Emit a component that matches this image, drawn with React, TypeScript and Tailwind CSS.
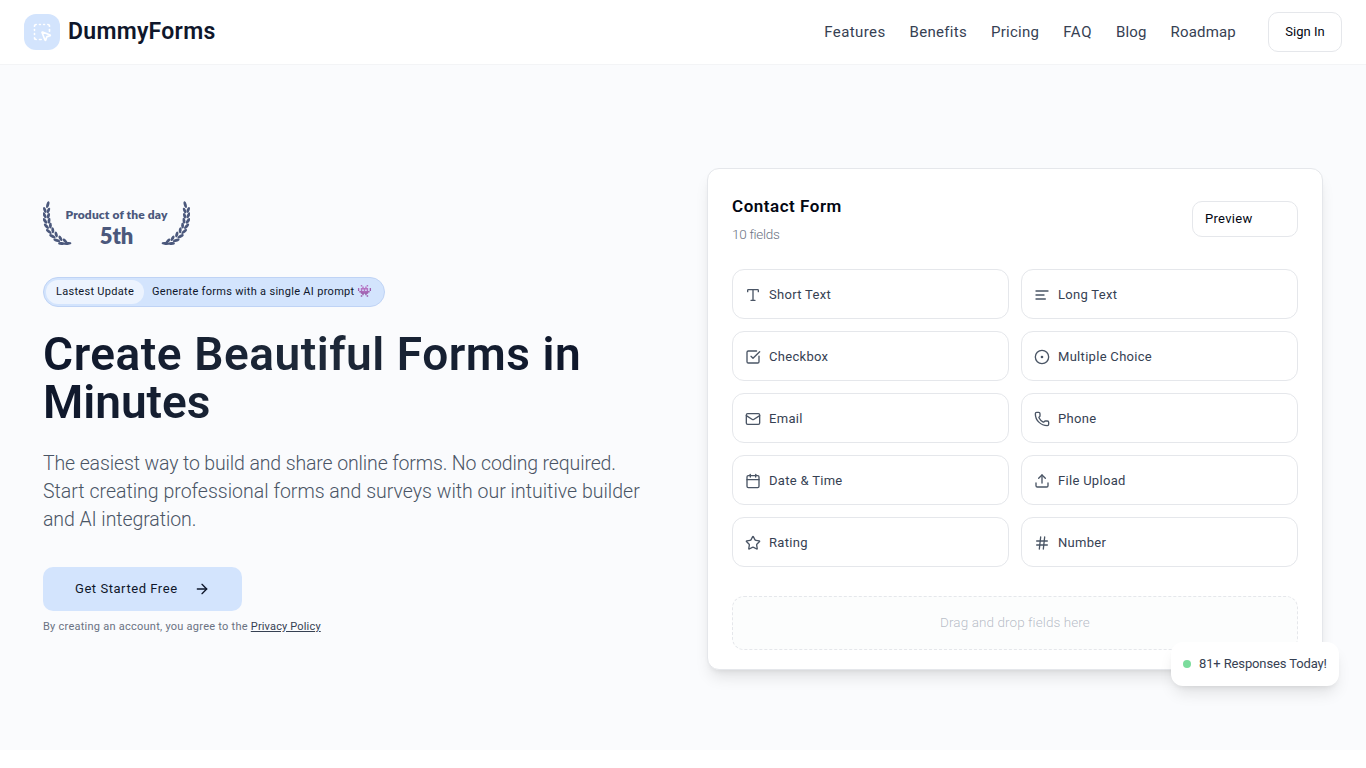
import {
  ArrowRight,
  Calendar,
  CircleDot,
  Hash,
  Mail,
  Phone,
  SquareCheckBig,
  SquareDashedMousePointer,
  Star,
  Type,
  Upload,
} from 'lucide-react'
import type { ComponentType } from 'react'

const navLinks = [
  { label: 'Features', className: 'tracking-[0.4px]' },
  { label: 'Benefits', className: 'tracking-[0.3px]' },
  { label: 'Pricing', className: 'tracking-[0.25px]' },
  { label: 'FAQ', className: 'tracking-[0.6px]' },
  { label: 'Blog', className: 'tracking-[0.1px]' },
  { label: 'Roadmap', className: 'tracking-[0.2px]' },
]

function LongTextIcon({ className }: { className?: string }) {
  return (
    <svg className={className} viewBox="0 0 24 24" fill="none" stroke="currentColor" strokeWidth="2" strokeLinecap="round" strokeLinejoin="round">
      <path d="M21 6H3" />
      <path d="M15 12H3" />
      <path d="M17 18H3" />
    </svg>
  )
}

const fields: { label: string; icon: ComponentType<{ className?: string }> }[] = [
  { label: 'Short Text', icon: Type },
  { label: 'Long Text', icon: LongTextIcon },
  { label: 'Checkbox', icon: SquareCheckBig },
  { label: 'Multiple Choice', icon: CircleDot },
  { label: 'Email', icon: Mail },
  { label: 'Phone', icon: Phone },
  { label: 'Date & Time', icon: Calendar },
  { label: 'File Upload', icon: Upload },
  { label: 'Rating', icon: Star },
  { label: 'Number', icon: Hash },
]

// x, y, rotation and half-length of every leaf in one laurel branch
const leaves = [
  [4.8, 4.2, 15, 3.5],
  [1.8, 9.4, -18, 3.1],
  [5.4, 10, 24, 2.9],
  [1.6, 14.8, -26, 3.2],
  [5.4, 15.2, 18, 2.9],
  [2, 20.4, -34, 3.2],
  [6, 20.2, 8, 2.9],
  [3.4, 25.8, -42, 3.3],
  [7.4, 25.1, 0, 3],
  [5.8, 31, -50, 3.4],
  [9.8, 29.8, -8, 3],
  [9.4, 35.8, -60, 3.5],
  [13.2, 34, -18, 3],
  [13.8, 39.8, -72, 3.5],
  [17.4, 37.8, -30, 3],
  [18.6, 43, -84, 3.5],
  [22, 40.4, -44, 3],
  [24.6, 43, -96, 3.8],
]

function Laurel({ className }: { className?: string }) {
  return (
    <svg className={className} width="29" height="46" viewBox="0 0 29 46" fill="#4b587c">
      {leaves.map(([x, y, angle, r]) => (
        <ellipse key={`${x}-${y}`} cx={x} cy={y + 0.5} rx="1.45" ry={r} transform={`rotate(${angle} ${x} ${y + 0.5})`} />
      ))}
    </svg>
  )
}

function Header() {
  return (
    <header className="flex h-[65px] items-center justify-between border-b border-gray-100 bg-white px-6">
      <div className="flex items-center gap-2">
        <div className="flex size-9 items-center justify-center rounded-xl bg-[#d3e4fd]">
          <SquareDashedMousePointer className="size-5 text-white" />
        </div>
        <span className="text-[23px] leading-8 font-semibold tracking-[0.28px] text-slate-900">DummyForms</span>
      </div>
      <div className="flex items-center gap-8">
        <nav className="flex gap-6 text-[15px] leading-6 text-gray-700">
          {navLinks.map((link) => (
            <a key={link.label} href="#" className={link.className}>{link.label}</a>
          ))}
        </nav>
        <button className="h-10 w-[74px] rounded-[10px] border border-gray-200 bg-white text-[13px] font-[450] tracking-[0.05px] text-gray-950">
          Sign In
        </button>
      </div>
    </header>
  )
}

function ProductBadge() {
  return (
    <div className="flex h-[46px] w-[147px] justify-between text-[#4b587c]">
      <Laurel />
      <div className="-mx-3 pt-2 text-center font-['Lato',sans-serif] font-extrabold whitespace-nowrap">
        <p className="text-xs leading-[14px] tracking-[0.13px]">Product of the day</p>
        <p className="text-[22px] leading-[28px]">5th</p>
      </div>
      <Laurel className="-scale-x-100" />
    </div>
  )
}

function HeroCopy() {
  return (
    <div className="flex flex-col items-start pt-8">
      <ProductBadge />
      <div className="mt-[31px] flex h-[30px] w-[342px] items-center rounded-full border border-[#bfd3f5] bg-[#d3e4fd] pl-0.5 text-[11px] font-[450] whitespace-nowrap text-slate-900">
        <span className="flex h-6 items-center rounded-full bg-[#ecf3fe] px-2.5 tracking-[0.29px]">Lastest Update</span>
        <span className="ml-2 tracking-[0.3px]">Generate forms with a single AI prompt <span className="text-xs tracking-normal">👾</span></span>
      </div>
      <h1 className="mt-[23px] bg-gradient-to-r from-slate-900 via-gray-800 to-slate-900 bg-clip-text text-[46px] leading-[48px] font-semibold whitespace-nowrap text-transparent">
        <span className="block tracking-[0.55px]">Create Beautiful Forms in</span>
        <span className="block">Minutes</span>
      </h1>
      <p className="mt-6 text-[19.5px] leading-7 font-[350] whitespace-nowrap text-gray-600">
        <span className="block tracking-[-0.13px]">The easiest way to build and share online forms. No coding required.</span>
        <span className="block tracking-[0.01px]">Start creating professional forms and surveys with our intuitive builder</span>
        <span className="block tracking-[-0.08px]">and AI integration.</span>
      </p>
      <button className="mt-[33px] flex h-11 w-[199px] items-center rounded-[10px] bg-[#d3e4fd] pl-8 text-[13px] font-[450] tracking-[0.55px] text-slate-900">
        Get Started Free
        <ArrowRight className="ml-4 size-4" />
      </button>
      <p className="mt-2 text-[11px] leading-4 tracking-[0.25px] whitespace-nowrap text-gray-500">
        By creating an account, you agree to the{' '}
        <a href="#" className="tracking-[0.16px] text-gray-700 underline">Privacy Policy</a>
      </p>
    </div>
  )
}

function FormPreview() {
  return (
    <div className="relative h-[502px] rounded-xl border border-gray-200 bg-white px-6 pt-6 shadow-lg">
      <div className="flex h-14 items-start justify-between">
        <div>
          <h3 className="text-[17px] leading-[26px] font-semibold tracking-[0.53px] text-gray-950">Contact Form</h3>
          <p className="mt-[3px] text-[13.5px] leading-6 font-[350] tracking-[-0.28px] text-gray-500">10 fields</p>
        </div>
        <button className="mt-2 h-9 w-[106px] rounded-[10px] border border-gray-200 px-3 text-left text-[13px] font-[450] tracking-[0.3px] text-gray-950">
          Preview
        </button>
      </div>
      <div className="mt-5 grid grid-cols-2 gap-3">
        {fields.map(({ label, icon: Icon }) => (
          <div key={label} className="flex h-[50px] items-center gap-2 rounded-xl border border-gray-200 px-3 pt-px text-gray-700">
            <Icon className="size-4 text-gray-600" />
            <span className="text-[13px] leading-5 font-[450] tracking-[0.3px]">{label}</span>
          </div>
        ))}
      </div>
      <div className="mt-[29px] flex h-[54px] items-center justify-center rounded-xl border border-dashed border-gray-200 bg-[#fcfdfd] pb-0.5 text-[13.5px] font-[350] tracking-[0.08px] text-gray-400/70">
        Drag and drop fields here
      </div>
      <div className="absolute -right-[17px] -bottom-[17px] flex h-11 w-[168px] items-center gap-2 rounded-xl bg-white pl-3 shadow-lg">
        <span className="size-2 rounded-full bg-[#7bdc9c]" />
        <span className="text-[13px] font-[450] tracking-[-0.13px] whitespace-nowrap text-gray-700">81+ Responses Today!</span>
      </div>
    </div>
  )
}

export default function App() {
  return (
    <div className="h-[768px] overflow-hidden bg-white font-['Roboto',sans-serif]">
      <Header />
      <section className="h-[685px] bg-[#fafbfd] pt-[103px]">
        <div className="mx-auto grid w-[1280px] grid-cols-2 gap-12">
          <HeroCopy />
          <FormPreview />
        </div>
      </section>
    </div>
  )
}
